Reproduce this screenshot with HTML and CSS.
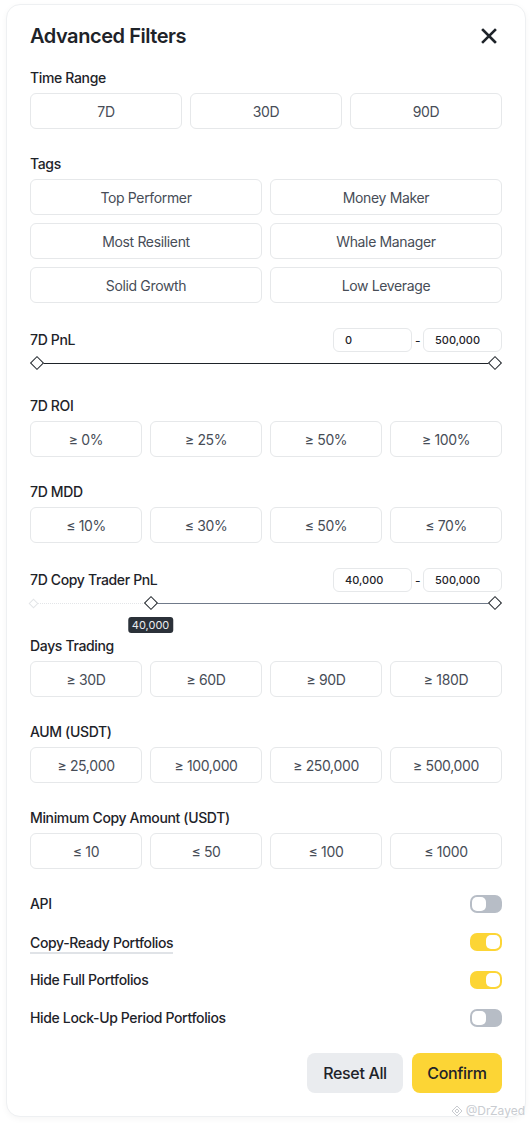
FILE: index.html
```html
<!DOCTYPE html>
<html>
<head>
<meta charset="utf-8">
<link rel="stylesheet" href="styles.css">
</head>
<body>
<div class="card">
  <div class="header">
    <h1 class="title">Advanced Filters</h1>
    <svg class="close" width="16" height="16" viewBox="0 0 16 16"><path d="M2 2L14 14M14 2L2 14" stroke="#1E2329" stroke-width="2.6" stroke-linecap="square"/></svg>
  </div>
  <div class="body">
    <section class="sec">
      <div class="label">Time Range</div>
      <div class="grid g3">
        <div class="opt">7D</div><div class="opt">30D</div><div class="opt">90D</div>
      </div>
    </section>
    <section class="sec">
      <div class="label">Tags</div>
      <div class="grid g2">
        <div class="opt">Top Performer</div><div class="opt">Money Maker</div>
        <div class="opt">Most Resilient</div><div class="opt">Whale Manager</div>
        <div class="opt">Solid Growth</div><div class="opt">Low Leverage</div>
      </div>
    </section>
    <section class="sec">
      <div class="range-head">
        <div class="label">7D PnL</div>
        <div class="inputs"><div class="inp">0</div><span class="dash">-</span><div class="inp">500,000</div></div>
      </div>
      <div class="slider">
        <div class="track full"></div>
        <span class="knob" style="left:0%"></span>
        <span class="knob" style="left:100%"></span>
      </div>
    </section>
    <section class="sec">
      <div class="label">7D ROI</div>
      <div class="grid g4">
        <div class="opt">≥ 0%</div><div class="opt">≥ 25%</div><div class="opt">≥ 50%</div><div class="opt">≥ 100%</div>
      </div>
    </section>
    <section class="sec">
      <div class="label">7D MDD</div>
      <div class="grid g4">
        <div class="opt">≤ 10%</div><div class="opt">≤ 30%</div><div class="opt">≤ 50%</div><div class="opt">≤ 70%</div>
      </div>
    </section>
    <section class="sec">
      <div class="range-head">
        <div class="label">7D Copy Trader PnL</div>
        <div class="inputs"><div class="inp">40,000</div><span class="dash">-</span><div class="inp">500,000</div></div>
      </div>
      <div class="slider">
        <div class="track faint"></div>
        <div class="track part" style="left:24.8%"></div>
        <span class="knob ghost" style="left:0%"></span>
        <span class="knob" style="left:24.8%"></span>
        <span class="knob" style="left:100%"></span>
        <span class="tip" style="left:24.8%">40,000</span>
      </div>
    </section>
    <section class="sec">
      <div class="label">Days Trading</div>
      <div class="grid g4">
        <div class="opt">≥ 30D</div><div class="opt">≥ 60D</div><div class="opt">≥ 90D</div><div class="opt">≥ 180D</div>
      </div>
    </section>
    <section class="sec">
      <div class="label">AUM (USDT)</div>
      <div class="grid g4">
        <div class="opt">≥ 25,000</div><div class="opt">≥ 100,000</div><div class="opt">≥ 250,000</div><div class="opt">≥ 500,000</div>
      </div>
    </section>
    <section class="sec">
      <div class="label">Minimum Copy Amount (USDT)</div>
      <div class="grid g4">
        <div class="opt">≤ 10</div><div class="opt">≤ 50</div><div class="opt">≤ 100</div><div class="opt">≤ 1000</div>
      </div>
    </section>
    <section class="toggles">
      <div class="trow"><span class="tlabel">API</span><span class="switch"></span></div>
      <div class="trow"><span class="tlabel under">Copy-Ready Portfolios</span><span class="switch on"></span></div>
      <div class="trow"><span class="tlabel">Hide Full Portfolios</span><span class="switch on"></span></div>
      <div class="trow"><span class="tlabel">Hide Lock-Up Period Portfolios</span><span class="switch"></span></div>
    </section>
    <div class="footer">
      <button class="btn reset">Reset All</button>
      <button class="btn confirm">Confirm</button>
    </div>
  </div>
  <div class="wm"><svg width="12" height="12" viewBox="0 0 12 12"><path d="M6 1L11 6L6 11L1 6Z M6 4L8 6L6 8L4 6Z" fill="none" stroke="#c9ccd1" stroke-width="1"/></svg>@DrZayed</div>
</div>
</body>
</html>
```
FILE: styles.css
```css
* { box-sizing: border-box; }
html, body { margin: 0; padding: 0; background: #fff; }
body {
  font-family: Inter, "Noto Sans", "Liberation Sans", sans-serif;
  color: #1E2329;
  width: 532px;
  height: 1126px;
  overflow: hidden;
  letter-spacing: -0.35px;
}
.card {
  position: relative;
  margin: 4px 0 0 6px;
  width: 520px;
  height: 1113px;
  border: 1px solid #eef0f2;
  border-radius: 14px;
  box-shadow: 0 2px 6px rgba(0,0,0,0.04);
  padding: 17px 23px 23px;
  background: #fff;
}
.header {
  display: flex;
  align-items: center;
  justify-content: space-between;
  height: 28px;
  margin-bottom: 18px;
}
.title {
  margin: 0;
  font-size: 20px;
  font-weight: 600;
  line-height: 28px;
  letter-spacing: -0.45px;
}
.close { margin-right: 5px; }
.body {
  display: flex;
  flex-direction: column;
  gap: 25px;
}
.label {
  font-size: 14px;
  font-weight: 500;
  line-height: 20px;
  color: #1E2329;
}
.sec > .label { margin-bottom: 5px; }
.grid { display: grid; gap: 8px; }
.g2 { grid-template-columns: repeat(2, 1fr); }
.g3 { grid-template-columns: repeat(3, 1fr); }
.g4 { grid-template-columns: repeat(4, 1fr); }
.opt {
  height: 36px;
  border: 1px solid #E6E8EA;
  border-radius: 6px;
  display: flex;
  align-items: center;
  justify-content: center;
  font-size: 14px;
  color: #474D57;
}
.range-head {
  display: flex;
  align-items: center;
  justify-content: space-between;
  height: 24px;
}
.inputs { display: flex; align-items: center; }
.inp {
  width: 79px;
  height: 24px;
  border: 1px solid #E6E8EA;
  border-radius: 6px;
  font-size: 11px;
  font-weight: 500;
  line-height: 22px;
  padding-left: 11px;
  color: #1E2329;
  letter-spacing: 0;
}
.dash { width: 11px; text-align: center; font-size: 12px; color: #1E2329; }
.slider {
  position: relative;
  height: 16px;
  margin: 3px 7px 0 7px;
}
.track {
  position: absolute;
  top: 7.5px;
  height: 1.5px;
  right: 0;
}
.track.full { left: 0; background: #1E2329; }
.track.faint { left: 0; border-top: 1px dotted #E3E5E8; height: 0; top: 8px; }
.track.part { background: #707A8A; }
.knob {
  position: absolute;
  top: 3px;
  width: 10px;
  height: 10px;
  margin-left: -5px;
  background: #fff;
  border: 1.5px solid #1E2329;
  transform: rotate(45deg);
}
.knob.ghost {
  width: 7px;
  height: 7px;
  top: 4.5px;
  margin-left: -7px;
  border: 1px solid #E3E5E8;
}
.tip {
  position: absolute;
  top: 22px;
  transform: translateX(-50%);
  background: #2B3139;
  color: #EAECEF;
  font-size: 11px;
  line-height: 16px;
  padding: 0 4px;
  border-radius: 3px;
  letter-spacing: 0;
}
.toggles {
  display: flex;
  flex-direction: column;
  gap: 18px;
}
.trow {
  display: flex;
  align-items: center;
  justify-content: space-between;
  height: 20px;
}
.tlabel { font-size: 14px; font-weight: 500; line-height: 20px; }
.tlabel.under { border-bottom: 2px solid #E0E3E7; line-height: 18px; margin-top: 4px; }
.switch {
  position: relative;
  width: 32px;
  height: 18px;
  border-radius: 7px;
  background: #B7BDC6;
}
.switch::after {
  content: "";
  position: absolute;
  top: 2px;
  left: 2px;
  width: 14px;
  height: 14px;
  border-radius: 5px;
  background: #fff;
}
.switch.on { background: #FCD535; }
.switch.on::after { left: 16px; }
.footer {
  display: flex;
  justify-content: flex-end;
  gap: 9px;
}
.btn {
  height: 40px;
  border: none;
  border-radius: 8px;
  font-family: inherit;
  font-size: 16px;
  font-weight: 500;
  letter-spacing: -0.35px;
  color: #1E2329;
  padding: 0;
  white-space: nowrap;
}
.reset { background: #EAECEF; width: 96px; }
.confirm { background: #FCD535; width: 90px; }
.wm {
  position: absolute;
  right: 0;
  bottom: -2px;
  font-size: 12px;
  color: #c9ccd1;
  display: flex;
  align-items: center;
  gap: 3px;
  letter-spacing: 0;
}
```
